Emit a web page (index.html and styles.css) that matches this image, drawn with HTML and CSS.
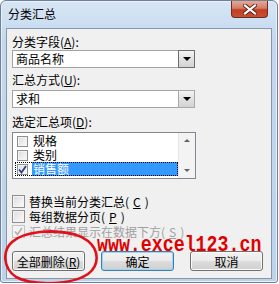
FILE: index.html
```html
<!DOCTYPE html>
<html lang="zh-CN">
<head>
  <meta charset="UTF-8">
  <title>分类汇总</title>
  <link rel="stylesheet" href="styles.css">
</head>
<body>

<div class="window">
  <div class="titlebar">
    <span class="title">分类汇总</span>
    <span class="close">
      <svg width="14" height="11" viewBox="0 0 14 11">
        <path d="M2 1.5 L12 9.5 M12 1.5 L2 9.5" stroke="#5a2018" stroke-width="4" stroke-linecap="square"/>
        <path d="M2 1.5 L12 9.5 M12 1.5 L2 9.5" stroke="#fff" stroke-width="2.2" stroke-linecap="square"/>
      </svg>
    </span>
  </div>

  <div class="client">
    <div class="label first">分类字段(<u>A</u>):</div>
    <div class="combo">
      <span class="value">商品名称</span>
      <span class="drop"><i class="tri"></i></span>
    </div>

    <div class="label">汇总方式(<u>U</u>):</div>
    <div class="combo second">
      <span class="value">求和</span>
      <span class="drop light"><i class="tri"></i></span>
    </div>

    <div class="label third">选定汇总项(<u>D</u>):</div>
    <div class="listbox">
      <div class="items">
        <div class="item"><span class="cb"></span><span class="txt">规格</span></div>
        <div class="item"><span class="cb"></span><span class="txt">类别</span></div>
        <div class="item focus">
          <span class="cb checked">
            <svg width="9" height="9" viewBox="0 0 9 9"><path d="M1 4.5 L3.5 7.5 L8 1" fill="none" stroke="#2a3f86" stroke-width="1.8"/></svg>
          </span>
          <span class="txt selected">销售额</span>
        </div>
      </div>
      <div class="scroll">
        <i class="arrow up"></i>
        <i class="arrow down"></i>
      </div>
    </div>

    <div class="checks">
      <div class="check"><span class="cb"></span>替换当前分类汇总(<u>C</u>)</div>
      <div class="check"><span class="cb"></span>每组数据分页(<u>P</u>)</div>
      <div class="check disabled">
        <span class="cb checked">
          <svg width="9" height="9" viewBox="0 0 9 9"><path d="M1 4.5 L3.5 7.5 L8 1" fill="none" stroke="#b5b5b5" stroke-width="1.8"/></svg>
        </span>汇总结果显示在数据下方(<u>S</u>)
      </div>
    </div>

    <div class="buttons">
      <button class="btn">全部删除(<u>R</u>)</button>
      <button class="btn default">确定</button>
      <button class="btn">取消</button>
    </div>
  </div>

  <div class="watermark">www.excel123.cn</div>

  <svg class="ring" width="100" height="58" viewBox="0 0 100 58">
    <path d="M70 6 C52 1 22 3 10 14 C0 23 1 40 14 49 C30 58 70 57 86 46 C98 37 97 22 86 13 C78 7 64 3 46 4"
          fill="none" stroke="#e2101a" stroke-width="2.6" stroke-linecap="round"/>
  </svg>
</div>

</body>
</html>
```

FILE: styles.css
```css
body {
  margin: 0;
  background: #fff;
  font-family: "Noto Sans CJK SC", "Liberation Sans", sans-serif;
  font-size: 12px;
  color: #000;
}

.window {
  position: relative;
  width: 278px;
  height: 283px;
  box-sizing: border-box;
  border: 1px solid #6f8197;
  border-radius: 6px 6px 3px 3px;
  background: linear-gradient(#d7e6f5, #c3d8ee 40px, #bcd3ea);
  box-shadow: inset 0 0 0 1px #e8f1fa;
}

.titlebar {
  height: 27px;
  display: flex;
  justify-content: space-between;
  align-items: flex-start;
}
.title {
  padding: 5px 0 0 7px;
  line-height: 16px;
  font-size: 12px;
}
.close {
  width: 37px;
  height: 17px;
  margin-right: 9px;
  box-sizing: border-box;
  border: 1px solid #6b2c22;
  border-top: none;
  border-radius: 0 0 4px 4px;
  background: linear-gradient(#e7a996, #d37c66 45%, #c13e22 55%, #c8502f);
  display: flex;
  align-items: center;
  justify-content: center;
}

.client {
  width: 266px;
  height: 251px;
  margin-left: 5px;
  box-sizing: border-box;
  border: 1px solid #8797aa;
  background: #f0f0f0;
  padding: 0 5px;
}

.label {
  line-height: 14px;
  margin-top: 5px;
}
.label.first {
  margin-top: 6px;
}
.label.third {
  margin-top: 7px;
}
u {
  text-decoration: underline;
}

.combo {
  width: 183px;
  height: 18px;
  margin-top: 1px;
  box-sizing: border-box;
  border: 1px solid #a3a3a3;
  background: #fff;
  display: flex;
}
.combo.second {
  margin-top: 3px;
}
.value {
  flex: 1;
  padding-left: 3px;
  line-height: 16px;
}
.drop {
  width: 17px;
  margin: -1px -1px -1px 0;
  box-sizing: border-box;
  border: 1px solid #6e6e6e;
  background: linear-gradient(#f4f4f4, #e2e2e2 50%, #d2d2d2);
  display: flex;
  align-items: center;
  justify-content: center;
}
.drop.light {
  border-color: #a9a9a9;
}
.tri {
  width: 0;
  height: 0;
  border-left: 4px solid transparent;
  border-right: 4px solid transparent;
  border-top: 4px solid #000;
}

.listbox {
  width: 184px;
  height: 47px;
  margin-top: 3px;
  box-sizing: border-box;
  border: 1px solid #828790;
  background: #fff;
  display: flex;
}
.items {
  flex: 1;
  padding: 1px 0 0 2px;
}
.item {
  height: 14px;
  display: flex;
  align-items: center;
  box-sizing: border-box;
  padding-left: 2px;
}
.item.focus {
  outline: 1px dotted #000;
  outline-offset: -1px;
}
.item .cb {
  width: 11px;
  height: 11px;
}
.txt {
  margin-left: 4px;
  line-height: 14px;
  padding: 0 1px;
}
.txt.selected {
  flex: 1;
  background: #3399ff;
  color: #fff;
}

.cb {
  width: 13px;
  height: 13px;
  box-sizing: border-box;
  border: 1px solid #8f8f8f;
  background: linear-gradient(135deg, #dcdcdc, #fbfbfb);
  box-shadow: inset 0 0 0 1px #f4f4f4;
  display: inline-flex;
  align-items: center;
  justify-content: center;
  flex-shrink: 0;
}

.scroll {
  width: 16px;
  background: #f3f3f3;
  border-left: 1px solid #e6e6e6;
  display: flex;
  flex-direction: column;
  justify-content: space-between;
  align-items: center;
  padding: 6px 0 6px;
}
.arrow {
  width: 0;
  height: 0;
  border-left: 3px solid transparent;
  border-right: 3px solid transparent;
}
.arrow.up {
  border-bottom: 3px solid #606060;
}
.arrow.down {
  border-top: 3px solid #606060;
}

.checks {
  margin-top: 15px;
}
.check {
  height: 15px;
  display: flex;
  align-items: center;
  gap: 4px;
}
.check.disabled {
  color: #a0a0a0;
}
.check.disabled .cb {
  border-color: #c4c4c4;
  background: #f4f4f4;
}

.buttons {
  margin-top: 12px;
  display: flex;
  gap: 16px;
}
.btn {
  width: 73px;
  height: 20px;
  padding: 0;
  font-family: inherit;
  font-size: 12px;
  color: #000;
  border: 1px solid #707070;
  border-radius: 3px;
  background: linear-gradient(#f2f2f2, #ebebeb 50%, #dddddd 51%, #cfcfcf);
  box-shadow: inset 0 0 0 1px #fbfbfb;
}
.btn.default {
  border-color: #3c7fb1;
  box-shadow: inset 0 0 0 1px #9ad6f2;
}

.watermark {
  position: absolute;
  left: 96px;
  top: 234px;
  font-family: "Liberation Mono", monospace;
  font-weight: bold;
  font-size: 22px;
  line-height: 22px;
  color: #e00000;
  transform: scaleX(0.83);
  transform-origin: left top;
  white-space: nowrap;
}

.ring {
  position: absolute;
  left: 1px;
  top: 227px;
}
```
